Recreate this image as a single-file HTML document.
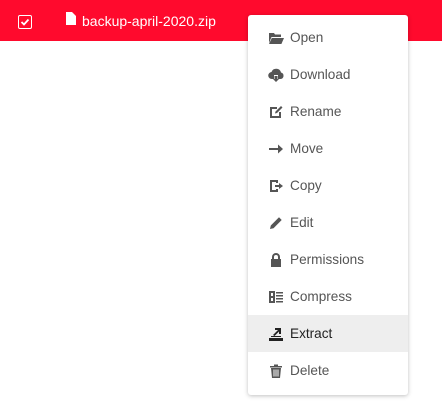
<!DOCTYPE html>
<html><head><style>
body{margin:0;width:442px;height:407px;background:#fff;font-family:"Liberation Sans",sans-serif;position:relative;overflow:hidden}
.bar{position:absolute;left:0;top:0;width:442px;height:41px;background:#ff0a2d}
.cb{position:absolute;left:18px;top:15px;width:12px;height:12px;border:1.5px solid #fff;border-radius:2px}
.fname{position:absolute;left:82px;top:13px;color:#fff;font-size:14px}
.menu{position:absolute;left:248px;top:15px;width:160px;height:380px;background:#fff;border-radius:3px;box-shadow:0 1px 4px rgba(0,0,0,.25)}
.it{position:absolute;left:0;width:160px;height:37px;font-size:13.6px;color:#555}
.it span{position:absolute;left:42px;top:11px}
.it svg{position:absolute;left:20px;top:11px;width:16px;height:16px;fill:#555}
.hl{background:#eee;color:#222}
</style></head><body>
<div class="bar"></div>
<div class="cb"><svg width="12" height="12" viewBox="0 0 12 12" style="position:absolute;left:0;top:0"><path d="M2.5 6l2.5 2.5 4.5-5" stroke="#fff" stroke-width="1.8" fill="none"/></svg></div>
<svg style="position:absolute;left:66px;top:12px" width="10" height="13" viewBox="0 0 10 13"><path d="M0 0h6l4 4v9H0z" fill="#fff"/></svg>
<div class="fname">backup-april-2020.zip</div>
<div class="menu">
<div class="it" style="top:4px"><svg viewBox="0 0 16 16"><path d="M1 3h5l1 1.5h6V7H3.5L1 13z M3.8 8H16l-2.6 6H1z"/></svg><span>Open</span></div>
<div class="it" style="top:41px"><svg viewBox="0 0 16 16"><path d="M4 12a3.5 3.5 0 0 1-.5-7A5 5 0 0 1 13 5.5 3.3 3.3 0 0 1 12.5 12H10V8H6v4z M6.5 9h3v3H11l-3 3-3-3h1.5z"/></svg><span>Download</span></div>
<div class="it" style="top:78px"><svg viewBox="0 0 16 16"><path d="M2 3h7v2H4v7h7V8h2v6H2z M9 9l-2 .5.5-2L13 2l1.5 1.5z"/></svg><span>Rename</span></div>
<div class="it" style="top:115px"><svg viewBox="0 0 16 16"><path d="M1 7h9V3.5L15 8l-5 4.5V9H1z"/></svg><span>Move</span></div>
<div class="it" style="top:152px"><svg viewBox="0 0 16 16"><path d="M2 2h8v3H8V4H4v8h4v-1h2v3H2z M7 7h4V5l4 3-4 3V9H7z"/></svg><span>Copy</span></div>
<div class="it" style="top:189px"><svg viewBox="0 0 16 16"><path d="M2 14l.8-3.5L11 2.3l2.7 2.7-8.2 8.2z"/></svg><span>Edit</span></div>
<div class="it" style="top:226px"><svg viewBox="0 0 16 16"><path d="M4 7V5a4 4 0 0 1 8 0v2h1v8H3V7z M6 7h4V5a2 2 0 0 0-4 0z"/></svg><span>Permissions</span></div>
<div class="it" style="top:263px"><svg viewBox="0 0 16 16"><path d="M1 2h6v12H1z M3 4v3h2V4z M3 9v3h2V9z M8 3h7v1.5H8z M8 6h7v1.5H8z M8 9h7v1.5H8z M8 12h7v1.5H8z" fill-rule="evenodd"/></svg><span>Compress</span></div>
<div class="it hl" style="top:300px"><svg viewBox="0 0 16 16" style="fill:#222"><path d="M1 12h14v3H1z M3 10h10v1H3z M5 9l5-5H7V2h6v6h-2V5.5L6.5 10z"/></svg><span>Extract</span></div>
<div class="it" style="top:337px"><svg viewBox="0 0 16 16"><path d="M2 3h12v1.5H2z M6 1.5h4V3H6z M3 5h10l-1 10H4z M5.5 6.5v7h1v-7z M7.5 6.5v7h1v-7z M9.5 6.5v7h1v-7z" fill-rule="evenodd"/></svg><span>Delete</span></div>
</div>
</body></html>
